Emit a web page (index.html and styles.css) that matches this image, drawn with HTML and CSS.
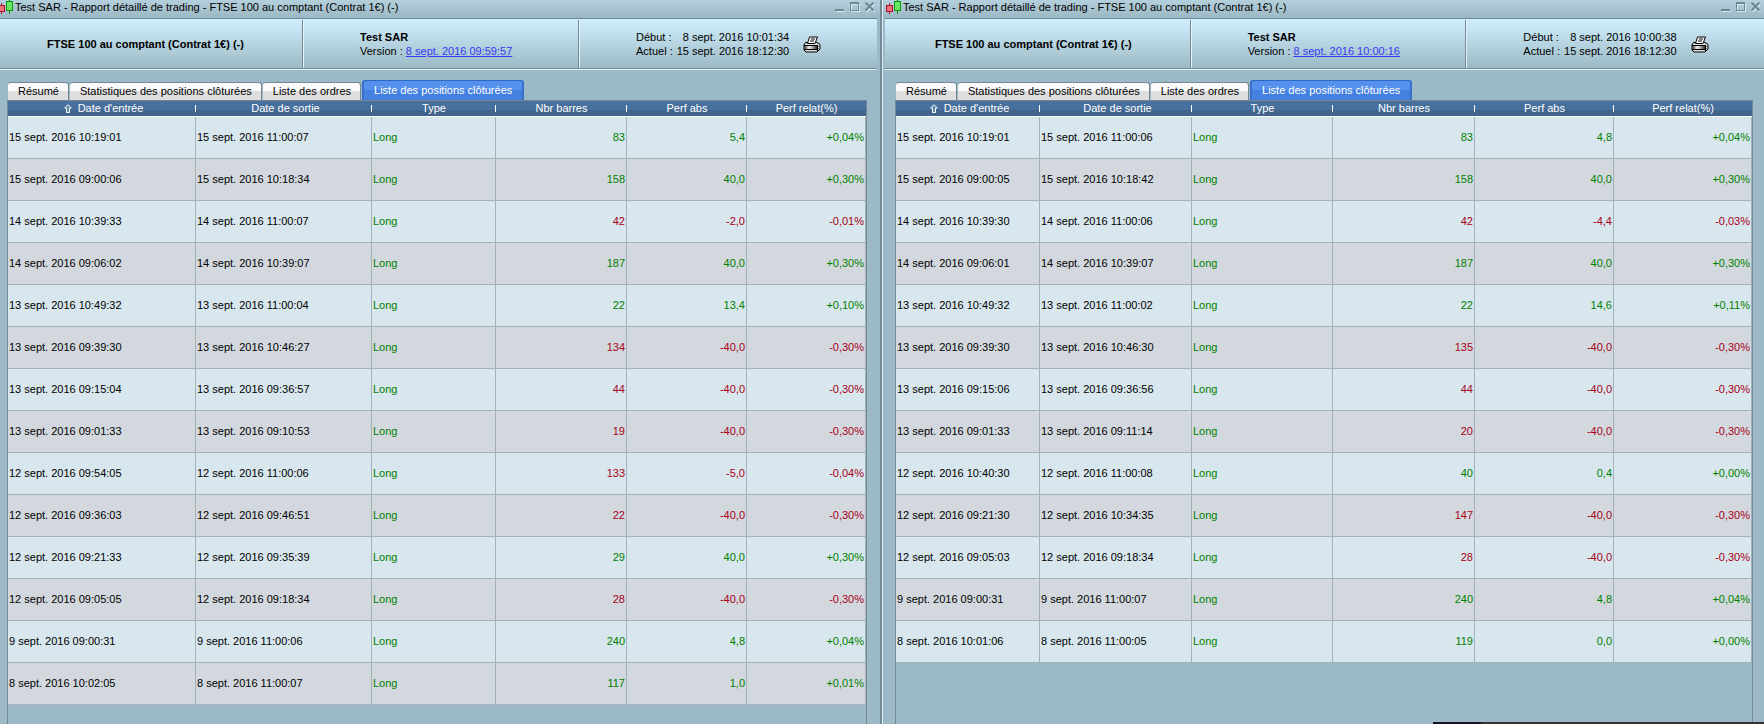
FILE: index.html
```html
<!DOCTYPE html>
<html lang="fr">
<head>
<meta charset="utf-8">
<title>Test SAR - Rapport détaillé de trading</title>
<link rel="stylesheet" href="styles.css">
</head>
<body>
<svg class="defs" aria-hidden="true">
  <defs>
    <linearGradient id="drum" x1="0" x2="1"><stop offset="0" stop-color="#333"/><stop offset=".4" stop-color="#f4f4f4"/><stop offset="1" stop-color="#333"/></linearGradient>
    <symbol id="candles" viewBox="0 0 16 16" shape-rendering="crispEdges">
      <path d="M4 4h1v11H4z" fill="#b01030"/><path d="M1 6h7v7H1z" fill="#b01030"/><path d="M2 7h5v5H2z" fill="#f07078"/>
      <path d="M12 0h1v15h-1z" fill="#0a8a0a"/><path d="M9 2h7v10H9z" fill="#0a9a0a"/><path d="M10 3h5v8h-5z" fill="#66e866"/>
    </symbol>
    <symbol id="printer" viewBox="0 0 18 17">
      <path d="M2.500 6.500h11.500l3 2v4.500l-3 3h-11l-2-2V9z" fill="#ddd" stroke="#000"/>
      <path d="M6.500 1h8l-2.500 6.500H4.500z" fill="#fff" stroke="#000"/>
      <path d="M8 3h4M7 5h4" stroke="#000"/>
      <path d="M1 10h13v3H1z" fill="url(#drum)"/>
      <path d="M1 9.500h13.500M1 13.500h13.500M14.500 9v6" stroke="#000"/>
      <path d="M15 10.500h2M15 12.500h2" stroke="#777"/>
    </symbol>
    <symbol id="min" viewBox="0 0 10 10" shape-rendering="crispEdges"><path d="M0 7h9v2H0z" fill="#71868f"/><path d="M1 9h9v1H1z" fill="#d3eaf4"/></symbol>
    <symbol id="max" viewBox="0 0 10 10" shape-rendering="crispEdges"><path d="M1.500 2.500h8v7h-8z" fill="none" stroke="#d3eaf4"/><path d="M.5.5h8v8h-8zM0 1.500h9" fill="none" stroke="#71868f"/></symbol>
    <symbol id="close" viewBox="0 0 10 10"><path d="M1.500 2l8 8M9.500 2l-8 8" stroke="#d3eaf4" stroke-width="1.500"/><path d="M.5.5l8 8M8.500.5l-8 8" stroke="#71868f" stroke-width="2"/></symbol>
    <symbol id="sort" viewBox="0 0 8 9"><path d="M4 .7L7.300 4H5.500v4.500h-3V4H.7z" fill="#5f8aa8" stroke="#fff"/></symbol>
  </defs>
</svg>
<main class="desktop" id="desktop"></main>
<div class="taskbar"></div>
<script src="app.js"></script>
</body>
</html>
```
FILE: styles.css
```css
* { box-sizing: border-box; }
body {
  margin: 0;
  height: 100vh;
  overflow: hidden;
  background: #9bb9c6;
  color: #000;
  font: 11px/14px "Liberation Sans", Arial, sans-serif;
}
button { font: inherit; color: inherit; border: 0; background: none; padding: 0; }
svg { display: block; }
.defs { position: absolute; width: 0; height: 0; }
.desktop { display: grid; grid-template-columns: 1fr 1fr; height: 100%; }
.window {
  display: flex;
  flex-direction: column;
  min-width: 0;
  border-left: 1px solid #d8eef8;
}
.window-left { margin-left: -6px; border-right: 2px solid #748993; }

.titlebar {
  display: flex;
  align-items: center;
  height: 18px;
  padding: 0 3px 4px 2px;
  background: linear-gradient(#b4d0dc, #9cb8c4);
}
.titlebar svg { width: 16px; height: 16px; }
.titlebar h1 { flex: 1; margin: 0 0 0 2px; font-size: 11px; font-weight: normal; white-space: nowrap; }
.controls { display: flex; gap: 5px; }
.titlebar .controls svg { width: 10px; height: 10px; }
.window-left .controls { margin-right: 2px; }

.summary {
  display: grid;
  grid-template-columns: 305fr 276fr 299fr;
  height: 52px;
  margin-left: 2px;
  border-top: 1px solid #748993;
  border-bottom: 1px solid #e4f4fb;
  box-shadow: inset 0 -1px #748993;
  background: linear-gradient(#d0effc, #9cb8c5);
}
.window-left .summary { margin-right: 3px; }
.summary > div { display: flex; align-items: center; margin: 1px 0; }
.summary > div + div { padding-left: 57px; border-left: 1px solid #748993; box-shadow: inset 1px 0 #e4f4fb; }
.summary .market { justify-content: center; padding-right: 8px; font-weight: bold; }
.summary p { margin: 0; }
.summary a { color: #3838f0; }
.dates { display: grid; grid-template-columns: auto auto; column-gap: 4px; margin: 0; }
.dates dd { margin: 0; text-align: right; }
.print { margin-left: 14px; }
.print svg { width: 18px; height: 17px; }

.report { flex: 1; display: flex; flex-direction: column; margin: 10px 11px 0 12px; }
.window-left .report { margin-right: 13px; }
.tabs { display: flex; align-items: flex-end; height: 20px; padding-left: 1px; gap: 1px; }
.tab {
  height: 18px;
  padding: 0 9px 2px 10px;
  border-top: 1px solid #748993;
  border-right: 1px solid #748993;
  border-radius: 3px 3px 0 0;
  background: linear-gradient(#fafafa 0 50%, #dedede 50%);
  white-space: nowrap;
}
.tab.active { height: 20px; padding: 0 12px 2px; border: 0; border-top: 1px solid #2f68c0; color: #fff; background: linear-gradient(#5590ec 0 50%, #4480e0 50%); box-shadow: inset 2px 0 #3a70cc, inset -2px 0 #3a70cc; }
.panel { flex: 1; border: 1px solid #748993; border-bottom: 0; }
table { width: 100%; table-layout: fixed; border-collapse: separate; border-spacing: 0; }
th {
  position: relative;
  height: 16px;
  padding: 0;
  font-weight: normal;
  line-height: 15px;
  color: #fff;
  background: linear-gradient(#48709c 0 60%, #40648c 60%);
  border-bottom: 1px solid #fff;
}
th:not(:last-child)::after { content: ""; position: absolute; right: 0; top: 4px; width: 1px; height: 7px; background: #fff; }
th svg { display: inline-block; width: 8px; height: 9px; margin-right: 6px; vertical-align: -1px; }
th:nth-child(-n+2) { padding-left: 3px; }
td { height: 42px; padding: 0 1px 2px; border-right: 1px solid #a3b1b8; border-bottom: 1px solid #a3b1b8; background: #d8e6ed; }
tr:nth-child(even) td { background: #d2d8de; }
td:nth-child(n+4) { text-align: right; }
.gain { color: #008000; }
.loss { color: #a80018; }
.taskbar { position: absolute; right: 0; bottom: 0; width: 331px; height: 2px; background: linear-gradient(90deg, #1a1420 48px, #3a3036 48px); }
```
FILE: app.js
```js
const reports = [
  {
    side: "left", version: "8 sept. 2016 09:59:57", start: "8 sept. 2016 10:01:34",
    widths: [188, 176, 124, 131, 120, 119],
    rows: `15 sept. 2016 10:19:01|15 sept. 2016 11:00:07|83|5,4|+0,04%
15 sept. 2016 09:00:06|15 sept. 2016 10:18:34|158|40,0|+0,30%
14 sept. 2016 10:39:33|14 sept. 2016 11:00:07|42|-2,0|-0,01%
14 sept. 2016 09:06:02|14 sept. 2016 10:39:07|187|40,0|+0,30%
13 sept. 2016 10:49:32|13 sept. 2016 11:00:04|22|13,4|+0,10%
13 sept. 2016 09:39:30|13 sept. 2016 10:46:27|134|-40,0|-0,30%
13 sept. 2016 09:15:04|13 sept. 2016 09:36:57|44|-40,0|-0,30%
13 sept. 2016 09:01:33|13 sept. 2016 09:10:53|19|-40,0|-0,30%
12 sept. 2016 09:54:05|12 sept. 2016 11:00:06|133|-5,0|-0,04%
12 sept. 2016 09:36:03|12 sept. 2016 09:46:51|22|-40,0|-0,30%
12 sept. 2016 09:21:33|12 sept. 2016 09:35:39|29|40,0|+0,30%
12 sept. 2016 09:05:05|12 sept. 2016 09:18:34|28|-40,0|-0,30%
9 sept. 2016 09:00:31|9 sept. 2016 11:00:06|240|4,8|+0,04%
8 sept. 2016 10:02:05|8 sept. 2016 11:00:07|117|1,0|+0,01%`
  },
  {
    side: "right", version: "8 sept. 2016 10:00:16", start: "8 sept. 2016 10:00:38",
    widths: [144, 152, 141, 142, 139, 138],
    rows: `15 sept. 2016 10:19:01|15 sept. 2016 11:00:06|83|4,8|+0,04%
15 sept. 2016 09:00:05|15 sept. 2016 10:18:42|158|40,0|+0,30%
14 sept. 2016 10:39:30|14 sept. 2016 11:00:06|42|-4,4|-0,03%
14 sept. 2016 09:06:01|14 sept. 2016 10:39:07|187|40,0|+0,30%
13 sept. 2016 10:49:32|13 sept. 2016 11:00:02|22|14,6|+0,11%
13 sept. 2016 09:39:30|13 sept. 2016 10:46:30|135|-40,0|-0,30%
13 sept. 2016 09:15:06|13 sept. 2016 09:36:56|44|-40,0|-0,30%
13 sept. 2016 09:01:33|13 sept. 2016 09:11:14|20|-40,0|-0,30%
12 sept. 2016 10:40:30|12 sept. 2016 11:00:08|40|0,4|+0,00%
12 sept. 2016 09:21:30|12 sept. 2016 10:34:35|147|-40,0|-0,30%
12 sept. 2016 09:05:03|12 sept. 2016 09:18:34|28|-40,0|-0,30%
9 sept. 2016 09:00:31|9 sept. 2016 11:00:07|240|4,8|+0,04%
8 sept. 2016 10:01:06|8 sept. 2016 11:00:05|119|0,0|+0,00%`
  }
];
const market = "FTSE 100 au comptant (Contrat 1€) (-)";
const icon = id => `<svg aria-hidden="true"><use href="#${id}"/></svg>`;
const row = line => {
  const [entry, exit, bars, abs, rel] = line.split("|");
  const tone = rel[0] === "+" ? "gain" : "loss";
  return `<tr><td>${entry}</td><td>${exit}</td><td class="gain">Long</td>` +
    [bars, abs, rel].map(v => `<td class="${tone}">${v}</td>`).join("") + "</tr>";
};
document.getElementById("desktop").innerHTML = reports.map(r => `
<section class="window window-${r.side}">
  <header class="titlebar">${icon("candles")}<h1>Test SAR - Rapport détaillé de trading - ${market}</h1>
    <div class="controls">
      <button aria-label="Réduire">${icon("min")}</button>
      <button aria-label="Agrandir">${icon("max")}</button>
      <button aria-label="Fermer">${icon("close")}</button>
    </div>
  </header>
  <div class="summary">
    <div class="market">${market}</div>
    <div><div><p><strong>Test SAR</strong></p><p>Version : <a href="#">${r.version}</a></p></div></div>
    <div>
      <dl class="dates"><dt>Début :</dt><dd>${r.start}</dd><dt>Actuel :</dt><dd>15 sept. 2016 18:12:30</dd></dl>
      <button class="print" aria-label="Imprimer">${icon("printer")}</button>
    </div>
  </div>
  <div class="report">
    <nav class="tabs">
      <button class="tab">Résumé</button>
      <button class="tab">Statistiques des positions clôturées</button>
      <button class="tab">Liste des ordres</button>
      <button class="tab active">Liste des positions clôturées</button>
    </nav>
    <div class="panel">
      <table>
        <colgroup>${r.widths.map(w => `<col style="width:${w}px">`).join("")}</colgroup>
        <thead><tr><th>${icon("sort")}Date d'entrée</th><th>Date de sortie</th><th>Type</th><th>Nbr barres</th><th>Perf abs</th><th>Perf relat(%)</th></tr></thead>
        <tbody>${r.rows.split("\n").map(row).join("")}</tbody>
      </table>
    </div>
  </div>
</section>`).join("");
```
